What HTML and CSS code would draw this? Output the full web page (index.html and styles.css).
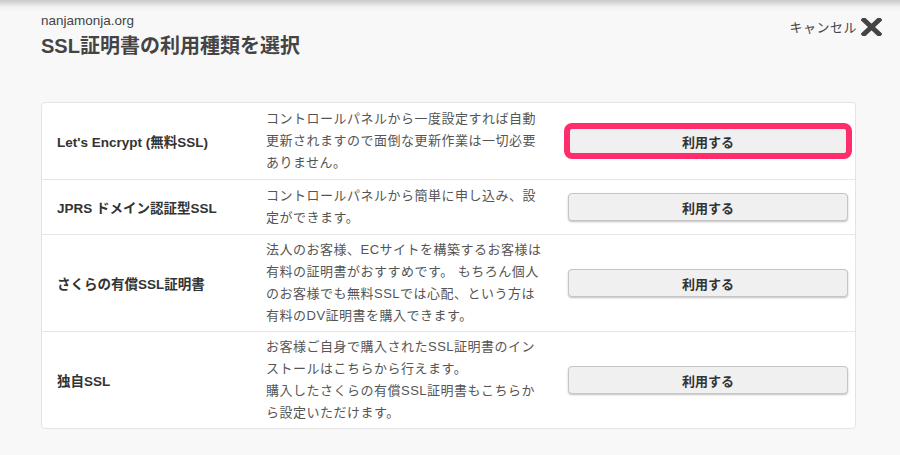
FILE: index.html
```html
<!DOCTYPE html>
<html lang="ja">
  <head>
    <meta charset="UTF-8" />
    <meta name="viewport" content="width=device-width, initial-scale=1.0" />
    <title>SSL証明書の利用種類を選択</title>
    <link rel="stylesheet" href="styles.css">
  </head>
  <body>
    <header class="page-header">
      <div>
        <p class="domain">nanjamonja.org</p>
        <h1 class="page-title">SSL証明書の利用種類を選択</h1>
      </div>
      <a class="cancel" href="#">
        キャンセル
        <svg class="cancel-icon" width="21" height="18" viewBox="0 0 21 18">
          <path d="M3 2 L18 16 M18 2 L3 16" stroke="#444" stroke-width="5" stroke-linecap="square" />
        </svg>
      </a>
    </header>
    <main class="ssl-table">
      <div class="ssl-row">
        <div class="ssl-name">Let's Encrypt (無料SSL)</div>
        <div class="ssl-desc">コントロールパネルから一度設定すれば自動更新されますので面倒な更新作業は一切必要ありません。</div>
        <div class="ssl-action">
          <button class="use-button is-marked" type="button">利用する</button>
        </div>
      </div>
      <div class="ssl-row">
        <div class="ssl-name">JPRS ドメイン認証型SSL</div>
        <div class="ssl-desc">コントロールパネルから簡単に申し込み、設定ができます。</div>
        <div class="ssl-action">
          <button class="use-button" type="button">利用する</button>
        </div>
      </div>
      <div class="ssl-row">
        <div class="ssl-name">さくらの有償SSL証明書</div>
        <div class="ssl-desc">法人のお客様、ECサイトを構築するお客様は有料の証明書がおすすめです。 もちろん個人のお客様でも無料SSLでは心配、という方は有料のDV証明書を購入できます。</div>
        <div class="ssl-action">
          <button class="use-button" type="button">利用する</button>
        </div>
      </div>
      <div class="ssl-row">
        <div class="ssl-name">独自SSL</div>
        <div class="ssl-desc">お客様ご自身で購入されたSSL証明書のインストールはこちらから行えます。<br />購入したさくらの有償SSL証明書もこちらから設定いただけます。</div>
        <div class="ssl-action">
          <button class="use-button" type="button">利用する</button>
        </div>
      </div>
    </main>
  </body>
</html>
```

FILE: styles.css
```css
* {
  box-sizing: border-box;
}
body {
  margin: 0;
  height: 100vh;
  font-family: "Liberation Sans", "Noto Sans CJK JP", sans-serif;
  color: #444;
  background: linear-gradient(#c9c9c9 0, #f2f2f2 7px, #f8f8f8 12px);
}

.page-header {
  display: flex;
  justify-content: space-between;
  align-items: flex-start;
  padding: 13px 18px 0 41px;
}

.domain {
  margin: 0;
  font-size: 13.5px;
  line-height: 16px;
  color: #444;
}

.page-title {
  margin: 5px 0 0;
  font-size: 20px;
  line-height: 24px;
  font-weight: bold;
  color: #444;
}

.cancel {
  display: flex;
  align-items: center;
  gap: 4px;
  margin-top: 4px;
  font-size: 13px;
  color: #444;
  text-decoration: none;
  letter-spacing: 0.5px;
}

.ssl-table {
  margin: 44px 44px 0 41px;
  background: #fff;
  border: 1px solid #e4e4e4;
  border-radius: 4px;
}

.ssl-row {
  display: grid;
  grid-template-columns: 224px 282px 1fr;
  align-items: center;
  min-height: 55px;
  padding: 4px 0;
  border-top: 1px solid #e6e6e6;
}
.ssl-row:first-child {
  border-top: none;
  min-height: 76px;
}

.ssl-name {
  padding-left: 15px;
  font-size: 13.5px;
  font-weight: bold;
  color: #333;
}

.ssl-desc {
  font-size: 13px;
  line-height: 22px;
  letter-spacing: 0.5px;
  color: #555;
}

.ssl-action {
  padding: 0 7px 0 20px;
}

.use-button {
  display: block;
  width: 100%;
  height: 28px;
  font-family: inherit;
  font-size: 13px;
  font-weight: bold;
  color: #333;
  background: #f0f0f0;
  border: 1px solid #c6c6c6;
  border-radius: 4px;
  box-shadow: 0 1px 2px rgba(0, 0, 0, 0.25);
}

.use-button.is-marked {
  outline: 6px solid #ff2d6c;
  outline-offset: -2px;
}
```
